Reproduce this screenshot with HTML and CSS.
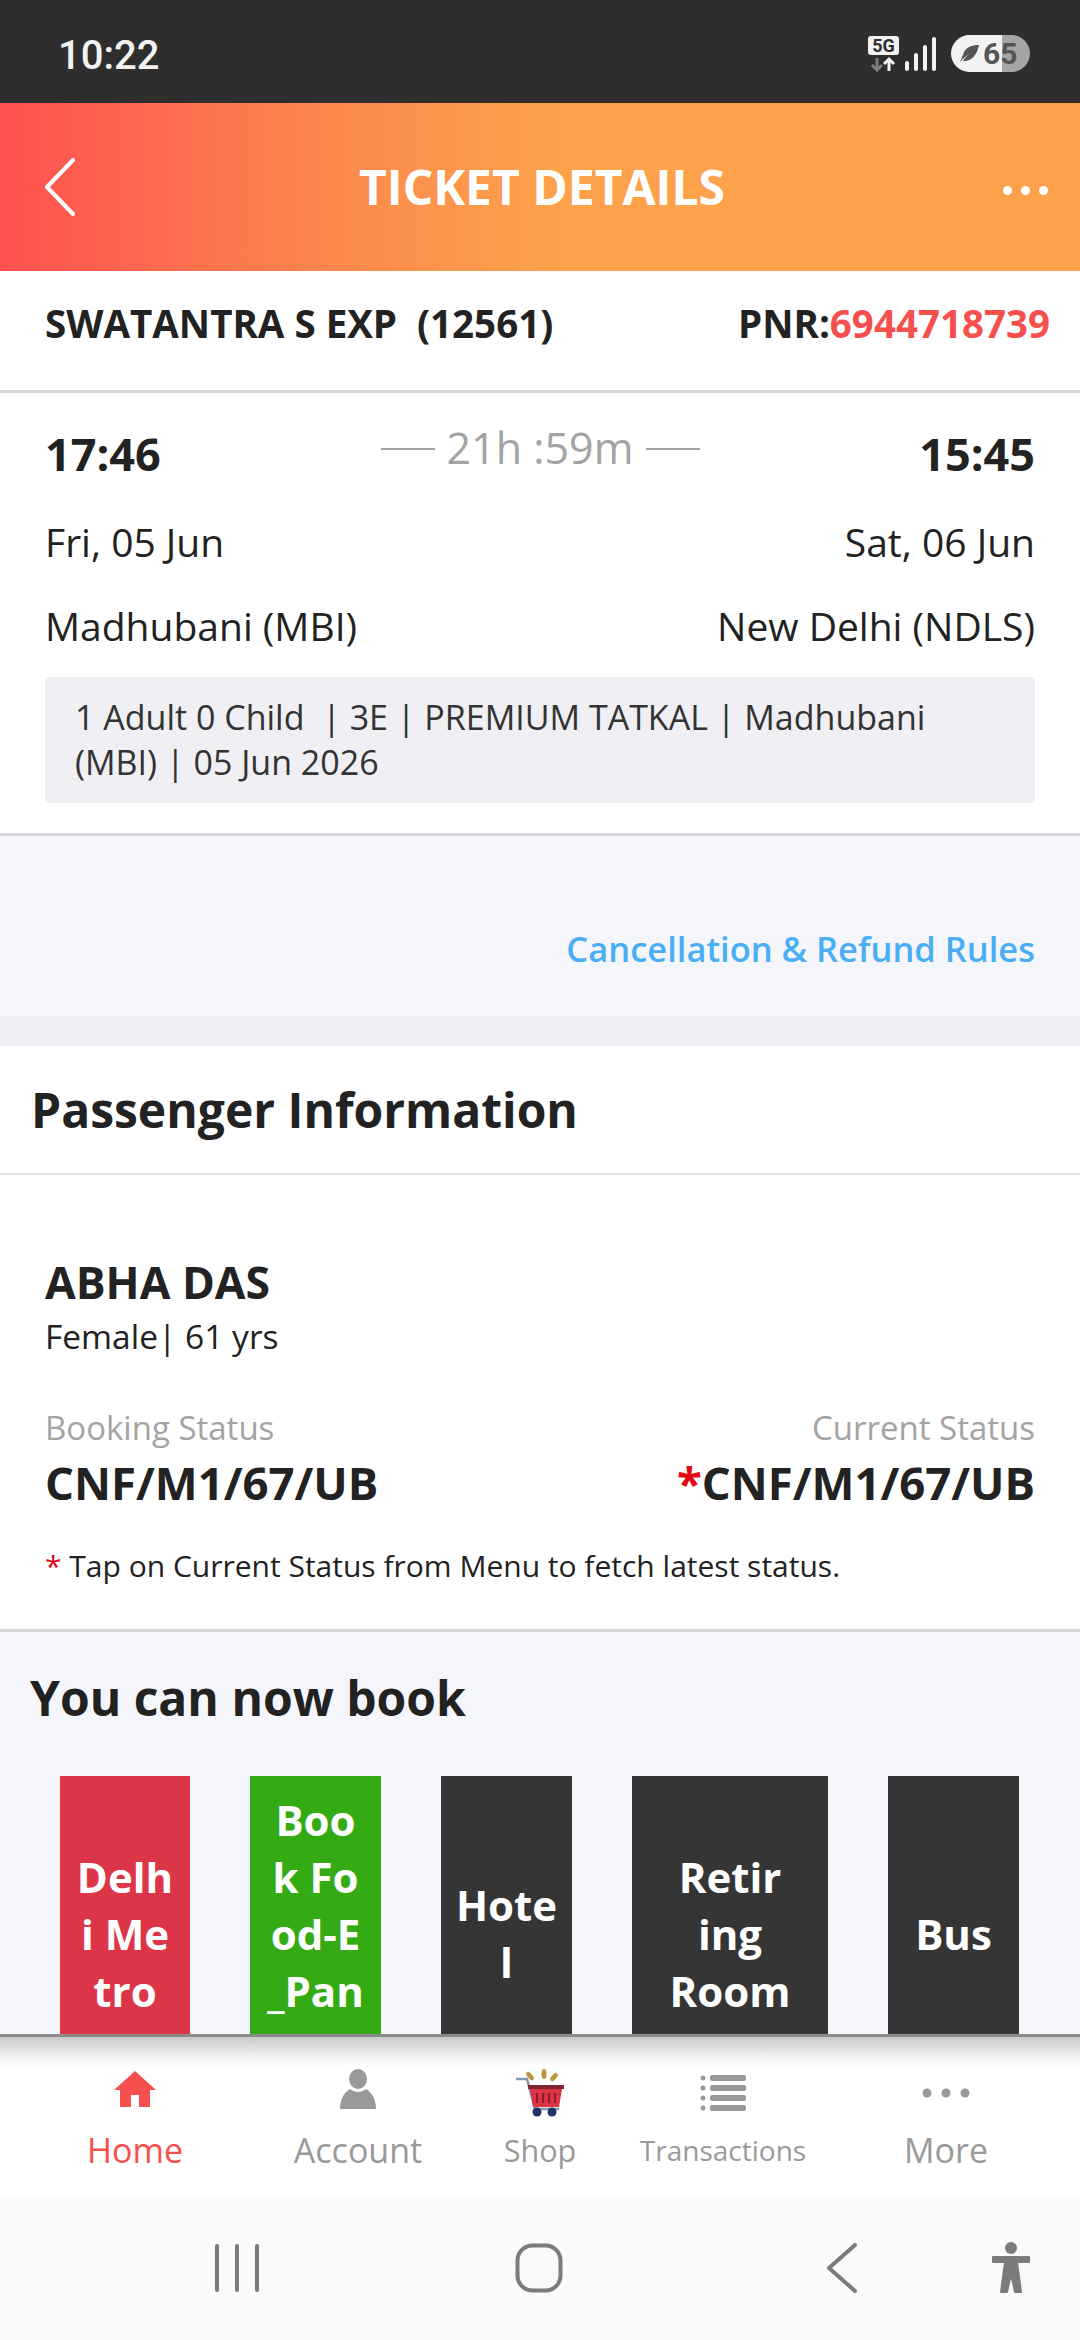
FILE: index.html
```html
<!DOCTYPE html>
<html lang="en">
<head>
<meta charset="UTF-8">
<meta name="viewport" content="width=device-width, initial-scale=1.0">
<title>Ticket Details</title>
<link rel="stylesheet" href="styles.css">
</head>
<body>

<div class="phone">

  <!-- status bar -->
  <div class="status">
    <span class="clock">10:22</span>
    <div class="status-icons">
      <svg class="net" width="32" height="36" viewBox="0 0 32 36" aria-hidden="true">
        <rect x="0" y="0" width="31" height="19" rx="3" fill="#f2f2f2"/>
        <text x="15.5" y="15.5" class="net-label" text-anchor="middle">5G</text>
        <path d="M9 22v12M4 29l5 5 5-5" fill="none" stroke="#7d7d7d" stroke-width="3"/>
        <path d="M21 35V23M16 28l5-5 5 5" fill="none" stroke="#f2f2f2" stroke-width="3"/>
      </svg>
      <svg class="signal" width="32" height="34" viewBox="0 0 32 34" aria-hidden="true">
        <rect x="0" y="24" width="4" height="10" rx="2" fill="#f2f2f2"/>
        <rect x="9" y="16" width="4" height="18" rx="2" fill="#f2f2f2"/>
        <rect x="18" y="8" width="4" height="26" rx="2" fill="#f2f2f2"/>
        <rect x="27" y="0" width="4" height="34" rx="2" fill="#f2f2f2"/>
      </svg>
      <div class="battery">
        <svg width="20" height="20" viewBox="0 0 20 20" aria-hidden="true">
          <path d="M0 18C4 14 6 12 9 10 6 13 4 15 3 17 10 18 17 12 19 1 12 1 5 3 3 11 2 13 1 16 0 18Z" fill="#555"/>
        </svg>
        <span>65</span>
      </div>
    </div>
  </div>

  <!-- header -->
  <header class="topbar">
    <svg class="back" width="32" height="58" viewBox="0 0 32 58" aria-hidden="true">
      <path d="M29 2 3 29l26 27" fill="none" stroke="#fff" stroke-width="4" stroke-linecap="round" stroke-linejoin="round"/>
    </svg>
    <h1>TICKET DETAILS</h1>
    <div class="dots"><i></i><i></i><i></i></div>
  </header>

  <main class="content">

    <section class="train">
      <span>SWATANTRA S EXP&nbsp; (12561)</span>
      <span>PNR:<b>6944718739</b></span>
    </section>

    <section class="journey">
      <div class="row row--time">
        <strong>17:46</strong>
        <span class="duration"><i></i>21h :59m<i></i></span>
        <strong>15:45</strong>
      </div>
      <div class="row"><span>Fri, 05 Jun</span><span>Sat, 06 Jun</span></div>
      <div class="row"><span>Madhubani (MBI)</span><span>New Delhi (NDLS)</span></div>
      <p class="summary">1 Adult 0 Child &nbsp;| 3E | PREMIUM TATKAL | Madhubani (MBI) | 05 Jun 2026</p>
    </section>

    <section class="rules">
      <a href="#">Cancellation &amp; Refund Rules</a>
    </section>

    <section class="passenger">
      <h2>Passenger Information</h2>
      <div class="passenger-body">
        <h3>ABHA DAS</h3>
        <p class="meta">Female| 61 yrs</p>
        <div class="status-row">
          <div>
            <p class="label">Booking Status</p>
            <p class="value">CNF/M1/67/UB</p>
          </div>
          <div class="right">
            <p class="label">Current Status</p>
            <p class="value"><em>*</em>CNF/M1/67/UB</p>
          </div>
        </div>
        <p class="note"><em>*</em> Tap on Current Status from Menu to fetch latest status.</p>
      </div>
    </section>

    <section class="book">
      <h2>You can now book</h2>
      <div class="tiles">
        <div class="tile tile--red">Delh<br>i Me<br>tro</div>
        <div class="tile tile--green">Boo<br>k Fo<br>od-E<br>_Pan<br>try</div>
        <div class="tile">Hote<br>l</div>
        <div class="tile tile--wide">Retir<br>ing<br>Room</div>
        <div class="tile">Bus</div>
      </div>
    </section>

  </main>

  <!-- bottom tabs -->
  <nav class="tabs">
    <a class="tab tab--home">
      <div class="tab-icon">
        <svg width="42" height="36" viewBox="0 0 42 36" aria-hidden="true">
          <path d="M21 0 42 19H36V36H25V24H17V36H6V19H0Z" fill="#f5504e"/>
        </svg>
      </div>
      <span>Home</span>
    </a>
    <a class="tab tab--account">
      <div class="tab-icon">
        <svg width="36" height="40" viewBox="0 0 36 40" aria-hidden="true">
          <ellipse cx="18" cy="10" rx="9" ry="10" fill="#999"/>
          <path d="M10 20C3 24 0 32 0 40H36C36 32 33 24 26 20 21 24 15 24 10 20Z" fill="#999"/>
        </svg>
      </div>
      <span>Account</span>
    </a>
    <a class="tab tab--shop">
      <div class="tab-icon">
        <svg width="50" height="48" viewBox="0 0 50 48" aria-hidden="true">
          <ellipse cx="15" cy="7" rx="2.5" ry="5" transform="rotate(-40 15 7)" fill="#b8963c"/>
          <ellipse cx="29" cy="5" rx="2.5" ry="5" fill="#b8963c"/>
          <ellipse cx="39" cy="8" rx="2.5" ry="5" transform="rotate(40 39 8)" fill="#b8963c"/>
          <path d="M1 10H12L20 40H44" fill="none" stroke="#8297ad" stroke-width="2.5"/>
          <rect x="13" y="16" width="36" height="4" fill="#7e2530"/>
          <path d="M15 20H47L44 38H18Z" fill="#dd3344"/>
          <path d="M22 24v10M28 24v10M34 24v10M40 24v10" stroke="#8a1f2c" stroke-width="2"/>
          <circle cx="22" cy="43" r="4.5" fill="#1e3264"/>
          <circle cx="37" cy="43" r="4.5" fill="#1e3264"/>
        </svg>
      </div>
      <span>Shop</span>
    </a>
    <a class="tab tab--trans">
      <div class="tab-icon">
        <svg width="46" height="38" viewBox="0 0 46 38" aria-hidden="true">
          <g fill="#999">
            <circle cx="3" cy="4" r="2.5"/><rect x="10" y="1" width="36" height="6" rx="2"/>
            <circle cx="3" cy="14" r="2.5"/><rect x="10" y="11" width="36" height="6" rx="2"/>
            <circle cx="3" cy="24" r="2.5"/><rect x="10" y="21" width="36" height="6" rx="2"/>
            <circle cx="3" cy="34" r="2.5"/><rect x="10" y="31" width="36" height="6" rx="2"/>
          </g>
        </svg>
      </div>
      <span>Transactions</span>
    </a>
    <a class="tab tab--more">
      <div class="tab-icon">
        <svg width="48" height="10" viewBox="0 0 48 10" aria-hidden="true">
          <circle cx="5" cy="5" r="4.5" fill="#999"/><circle cx="24" cy="5" r="4.5" fill="#999"/><circle cx="43" cy="5" r="4.5" fill="#999"/>
        </svg>
      </div>
      <span>More</span>
    </a>
  </nav>

  <!-- system navigation -->
  <div class="sysnav">
    <svg width="44" height="48" viewBox="0 0 44 48" aria-hidden="true">
      <path d="M2 2v44M22 2v44M42 2v44" stroke="#7b7b7b" stroke-width="4" stroke-linecap="round"/>
    </svg>
    <svg class="sys-home" width="48" height="50" viewBox="0 0 48 50" aria-hidden="true">
      <rect x="2.5" y="2.5" width="43" height="45" rx="15" fill="none" stroke="#7b7b7b" stroke-width="4"/>
    </svg>
    <svg class="sys-back" width="32" height="50" viewBox="0 0 32 50" aria-hidden="true">
      <path d="M29 2 3 25l26 23" fill="none" stroke="#7b7b7b" stroke-width="4" stroke-linecap="round" stroke-linejoin="round"/>
    </svg>
    <svg class="sys-access" width="42" height="52" viewBox="0 0 42 52" aria-hidden="true">
      <circle cx="21" cy="6" r="6" fill="#7b7b7b"/>
      <path d="M3 15H39V20H27L31 50H25L21 32 17 50H11L15 20H3Z" fill="#7b7b7b" stroke="#7b7b7b" stroke-width="2" stroke-linejoin="round"/>
    </svg>
  </div>

</div>

</body>
</html>
```

FILE: styles.css
```css
:root {
  --ink: #222222;
  --grey: #a3a3a3;
  --red: #f5504e;
  --line: #d6d6d6;
  --pale: #f5f6fb;
}
* { margin: 0; padding: 0; box-sizing: border-box; }
body {
  background: #fff;
  color: var(--ink);
  font-family: "Open Sans", "Noto Sans", sans-serif;
}
a { color: inherit; text-decoration: none; }
em { font-style: normal; color: #e30613; }

.phone {
  width: 1080px;
  height: 2340px;
  display: flex;
  flex-direction: column;
  overflow: hidden;
}

/* ---------- status bar ---------- */
.status {
  height: 103px;
  flex: none;
  background: #2e2e2e;
  color: #f2f2f2;
  display: flex;
  align-items: center;
  justify-content: space-between;
  padding: 4px 50px 0 58px;
}
.clock { font-family: Roboto, sans-serif; font-size: 40px; font-weight: 500; margin-top: 4px; }
.status-icons { display: flex; align-items: center; gap: 14px; }
.net { margin-right: -9px; }
.net-label { font-family: Roboto, sans-serif; font-size: 18px; font-weight: 700; fill: #2e2e2e; }
.battery {
  width: 79px;
  height: 37px;
  border-radius: 19px;
  background: linear-gradient(90deg, #f2f2f2 64.5%, #a5a5a5 64.5%);
  color: #555;
  font-family: Roboto, sans-serif;
  font-size: 30px;
  font-weight: 700;
  display: flex;
  align-items: center;
  gap: 3px;
  padding-left: 9px;
}

/* ---------- header ---------- */
.topbar {
  height: 168px;
  flex: none;
  background: linear-gradient(90deg, #ff5050 0%, #fb8a4c 32%, #fda24b 52%, #fda24b 100%);
  color: #fff;
  display: flex;
  align-items: center;
  padding: 0 29px 0 44px;
}
.back { margin-right: 5px; }
.topbar h1 {
  flex: 1;
  text-align: center;
  font-size: 48px;
  font-weight: 700;
  line-height: 64px;
}
.dots { display: flex; gap: 9px; width: 48px; padding-top: 6px; }
.dots i { width: 9px; height: 9px; border-radius: 50%; background: #fff; }

/* ---------- content ---------- */
.content { flex: 1; min-height: 0; overflow: hidden; }

.train {
  height: 122px;
  display: flex;
  align-items: center;
  justify-content: space-between;
  padding: 0 30px 16px 45px;
  font-size: 38.5px;
  font-weight: 700;
  border-bottom: 3px solid var(--line);
}
.train b { font-weight: 700; color: var(--red); }

.journey {
  padding: 18px 45px 30px;
  border-bottom: 3px solid var(--line);
}
.row {
  height: 84px;
  display: flex;
  align-items: center;
  justify-content: space-between;
  font-size: 39px;
}
.row strong { font-size: 45px; font-weight: 700; }
.duration {
  display: flex;
  align-items: center;
  gap: 12px;
  font-size: 43px;
  font-weight: 400;
  color: var(--grey);
  margin-top: -12px;
}
.duration i { width: 54px; height: 2px; background: var(--grey); margin-top: 4px; }
.row--time + .row { margin-top: 4px; }
.summary {
  margin-top: 10px;
  padding: 18px 30px;
  background: #efeff4;
  font-size: 34px;
  font-weight: 500;
  line-height: 45px;
  color: #333;
}

.rules {
  height: 180px;
  background: var(--pale);
  display: flex;
  justify-content: flex-end;
  align-items: flex-end;
  padding: 0 45px 44px;
  font-size: 34.5px;
  font-weight: 600;
  color: #4aaef5;
}

.passenger { border-top: 30px solid #efeff4; }
.passenger h2 {
  height: 129px;
  display: flex;
  align-items: center;
  padding: 0 31px 0;
  font-size: 48px;
  font-weight: 700;
  border-bottom: 2px solid #e2e2e2;
}
.passenger-body {
  height: 457px;
  padding: 78px 45px 0;
  border-bottom: 3px solid var(--line);
}
.passenger-body h3 { font-size: 44.5px; font-weight: 700; line-height: 58px; }
.meta { font-size: 33.5px; line-height: 45px; margin-top: 3px; }
.status-row {
  display: flex;
  justify-content: space-between;
  margin-top: 46px;
}
.right { text-align: right; }
.label { font-size: 33px; line-height: 45px; color: var(--grey); }
.value { font-size: 45.5px; font-weight: 700; line-height: 60px; margin-top: 2px; }
.note { font-size: 30px; line-height: 42px; margin-top: 33px; }

.book { background: var(--pale); padding: 0 0 0 30px; }
.book h2 {
  height: 130px;
  display: flex;
  align-items: center;
  font-size: 48px;
  font-weight: 700;
  margin-bottom: 14px;
}
.tiles { display: flex; gap: 60px; padding-left: 30px; }
.tile {
  width: 131px;
  height: 314px;
  flex: none;
  background: #353535;
  color: #fff;
  font-size: 42px;
  font-weight: 700;
  line-height: 57px;
  text-align: center;
  display: flex;
  align-items: center;
  justify-content: center;
}
.tile--red { background: #dd3548; width: 130px; }
.tile--green { background: #34ab15; }
.tile--wide { width: 196px; }

/* ---------- bottom tabs ---------- */
.tabs {
  height: 162px;
  flex: none;
  border-top: 3px solid #8b8b8b;
  background: linear-gradient(#c9c9c9 0, #f2f2f2 20px, #fff 30px);
  display: flex;
  color: #999;
  font-size: 34px;
  font-weight: 500;
}
.tab {
  flex: none;
  display: flex;
  flex-direction: column;
  align-items: center;
}
.tab-icon {
  height: 90px;
  padding-top: 22px;
  display: flex;
  align-items: center;
  justify-content: center;
}
.tab-icon svg { display: block; }
.tab span { line-height: 46px; }
.tab--home { width: 270px; color: var(--red); }
.tab--home .tab-icon, .tab--account .tab-icon { padding-top: 14px; }
.tab--account { width: 176px; }
.tab--shop { width: 188px; }
.tab--shop span { font-size: 30.5px; }
.tab--trans { width: 178px; }
.tab--trans span { font-size: 28px; }
.tab--more { flex: 1; }

/* ---------- system nav ---------- */
.sysnav {
  height: 144px;
  flex: none;
  background: #fafafa;
  display: flex;
  align-items: center;
  padding-left: 215px;
}
.sys-home { margin-left: 256px; }
.sys-back { margin-left: 263px; }
.sys-access { margin-left: 132px; }
```
